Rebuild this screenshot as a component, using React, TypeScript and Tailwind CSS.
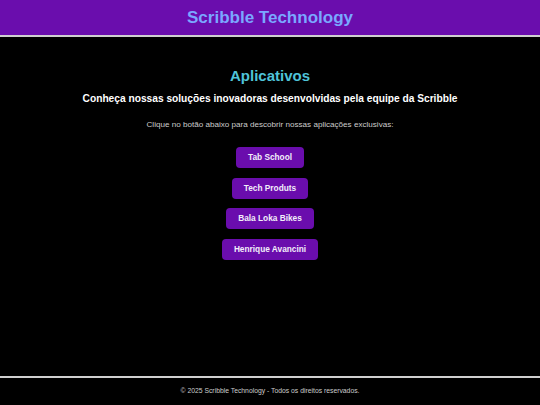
const apps = ["Tab School", "Tech Produts", "Bala Loka Bikes", "Henrique Avancini"];

export default function App() {
  return (
    <div className="flex h-[405px] w-[540px] flex-col bg-black font-['Liberation_Sans',Arial,sans-serif]">
      {/* Header */}
      <header className="flex h-[37px] items-center justify-center border-b-2 border-[#cfcfcf] bg-[#6a0dad]">
        <h1 className="text-[17px] font-bold text-[#7aa7ff]">Scribble Technology</h1>
      </header>

      {/* Main */}
      <main className="flex flex-1 flex-col items-center pt-[30px]">
        <h2 className="text-[15px] font-bold leading-[18px] text-[#4fc3d9]">Aplicativos</h2>
        <p className="mt-[7px] text-[10.2px] font-bold leading-[14px] text-white">
          Conheça nossas soluções inovadoras desenvolvidas pela equipe da Scribble
        </p>
        <p className="mt-[14px] text-[8.1px] leading-[10px] text-[#cccccc]">
          Clique no botão abaixo para descobrir nossas aplicações exclusivas:
        </p>
        <div className="mt-[17px] flex flex-col items-center gap-[9.6px]">
          {apps.map((name) => (
            <button
              key={name}
              className="h-[21px] rounded-[4px] bg-[#6a0dad] px-[12px] text-[8.3px] font-bold text-[#f2eefa]"
            >
              {name}
            </button>
          ))}
        </div>
      </main>

      {/* Footer */}
      <footer className="flex h-[29px] items-center justify-center border-t-2 border-[#cfcfcf]">
        <p className="text-[6.8px] text-[#cccccc]">© 2025 Scribble Technology - Todos os direitos reservados.</p>
      </footer>
    </div>
  );
}
